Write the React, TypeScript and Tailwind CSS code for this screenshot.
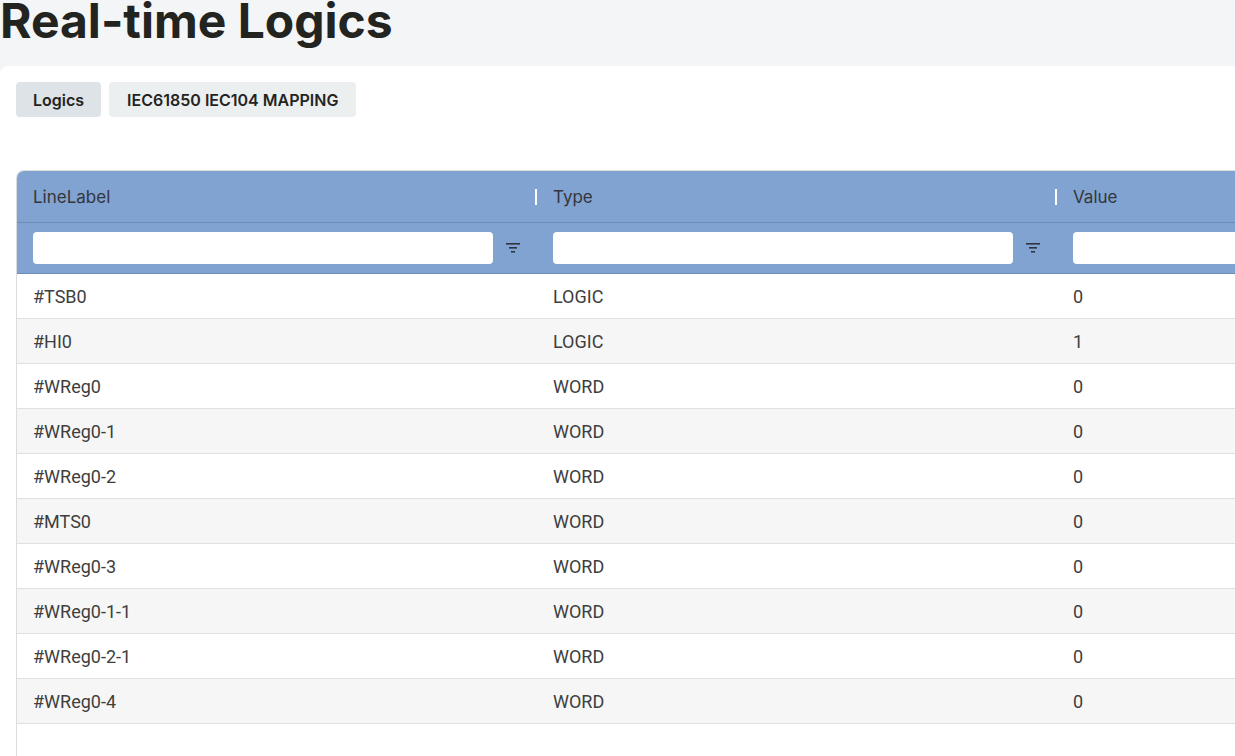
import React from "react";

interface LogicRow {
  label: string;
  type: string;
  value: number;
}

const rows: LogicRow[] = [
  { label: "#TSB0", type: "LOGIC", value: 0 },
  { label: "#HI0", type: "LOGIC", value: 1 },
  { label: "#WReg0", type: "WORD", value: 0 },
  { label: "#WReg0-1", type: "WORD", value: 0 },
  { label: "#WReg0-2", type: "WORD", value: 0 },
  { label: "#MTS0", type: "WORD", value: 0 },
  { label: "#WReg0-3", type: "WORD", value: 0 },
  { label: "#WReg0-1-1", type: "WORD", value: 0 },
  { label: "#WReg0-2-1", type: "WORD", value: 0 },
  { label: "#WReg0-4", type: "WORD", value: 0 },
];

const columns = ["LineLabel", "Type", "Value"];

function FilterIcon() {
  return (
    <svg width="16" height="12" viewBox="0 0 16 12" className="text-[#2f3540]">
      <rect x="1" y="1" width="14" height="1.6" fill="currentColor" />
      <rect x="4" y="5" width="8" height="1.6" fill="currentColor" />
      <rect x="6" y="9" width="4" height="1.6" fill="currentColor" />
    </svg>
  );
}

export default function App() {
  return (
    <main className="min-h-screen bg-[#f4f5f7] font-['Inter',sans-serif] overflow-hidden pt-px">
      <h1 className="text-[48px] leading-[58px] -mt-[9px] mb-4 font-bold text-[#23241f] whitespace-nowrap">
        Real-time Logics
      </h1>

      <div className="bg-white rounded-tl-lg h-[700px] pt-4 pl-4">
        {/* Tabs */}
        <div className="flex gap-2">
          <button className="h-[35px] px-[17px] rounded-[4px] bg-[#dde3e6] text-[16px] font-semibold text-[#23241f]">
            Logics
          </button>
          <button className="h-[35px] px-[18px] rounded-[4px] bg-[#eceff0] text-[16px] font-semibold text-[#23241f]">
            IEC61850 IEC104 MAPPING
          </button>
        </div>

        {/* Table */}
        <div className="mt-[53px] w-[1600px] h-[600px] border-l border-t border-[#dcdcdc] rounded-tl-lg overflow-hidden">
          <div className="bg-[#81a3d1]">
            <div className="flex h-[52px] border-b border-[#6c8cba]">
              {columns.map((c, i) => (
                <div key={c} className="relative w-[520px] flex items-center px-4 pt-[2px] text-[17px] text-[#33363b]">
                  {c}
                  {i < columns.length - 1 && (
                    <span className="absolute right-0 top-[18px] w-[2px] h-4 bg-white" />
                  )}
                </div>
              ))}
            </div>
            <div className="flex h-[51px] border-b border-[#6c8cba]">
              {columns.map((c) => (
                <div key={c} className="w-[520px] flex items-center pl-4">
                  <input className="w-[460px] h-8 bg-white rounded-[4px] outline-none" />
                  <div className="w-[40px] flex justify-center">
                    <FilterIcon />
                  </div>
                </div>
              ))}
            </div>
          </div>

          {rows.map((r, i) => (
            <div
              key={r.label}
              className={`flex h-[45px] border-b border-[#e0e0e0] font-['Roboto',sans-serif] text-[18px] text-[#3e3e3e] ${
                i % 2 === 1 ? "bg-[#f6f6f6]" : "bg-white"
              }`}
            >
              <div className="w-[520px] flex items-center px-4 pt-px">{r.label}</div>
              <div className="w-[520px] flex items-center px-4 pt-px">{r.type}</div>
              <div className="w-[520px] flex items-center px-4 pt-px">{r.value}</div>
            </div>
          ))}
        </div>
      </div>
    </main>
  );
}
